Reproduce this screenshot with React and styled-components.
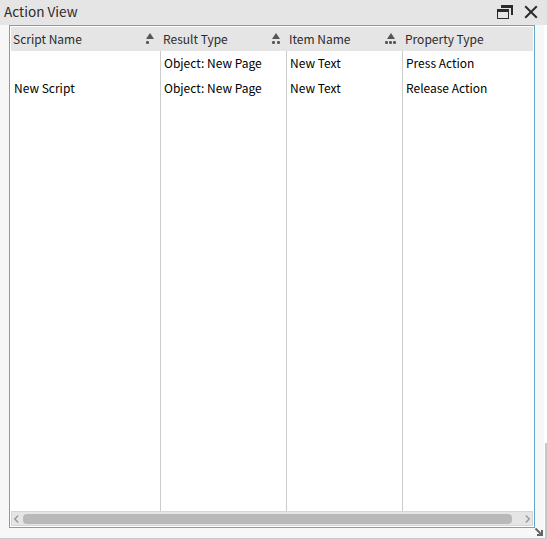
import React from "react";
import styled, { createGlobalStyle } from "styled-components";

const columns = [
  { title: "Script Name", width: 150, dots: 1, cells: ["", "New Script"] },
  {
    title: "Result Type",
    width: 126,
    dots: 2,
    cells: ["Object: New Page", "Object: New Page"],
  },
  { title: "Item Name", width: 116, dots: 3, cells: ["New Text", "New Text"] },
  {
    title: "Property Type",
    width: 130,
    dots: 0,
    cells: ["Press Action", "Release Action"],
  },
];

const sortMarks = {
  1: { tip: 7, dots: [3] },
  2: { tip: 7, dots: [3, 8] },
  3: { tip: 6, dots: [0, 4, 8] },
};

const SortIcon = ({ dots }) => {
  const { tip, dots: positions } = sortMarks[dots];
  return (
    <S.Sort width="12" height="11" viewBox="0 0 12 11">
      <path d={`M${tip} 0 l4 6 h-8 z`} />
      {positions.map((x) => (
        <rect key={x} x={x} y="8" width="3" height="3" rx="1.2" />
      ))}
    </S.Sort>
  );
};

const App = () => {
  return (
    <>
      <GlobalStyle />
      <S.Window>
        <S.TitleBar>
          <S.Title>Action View</S.Title>
          <S.Tools>
            <svg width="16" height="14" viewBox="0 0 16 14">
              <path
                d="M4 0h12v10h-2V3H4zM0 4h12v10H0zM1 7v6h10V7z"
                fill="#2b2b2b"
                fillRule="evenodd"
              />
            </svg>
            <svg width="14" height="14" viewBox="0 0 14 14">
              <path
                d="M1.2 1.2l11.6 11.6M12.8 1.2l-11.6 11.6"
                stroke="#2b2b2b"
                strokeWidth="2"
              />
            </svg>
          </S.Tools>
        </S.TitleBar>
        <S.Panel>
          <S.Table>
            {columns.map((column) => (
              <S.Column key={column.title} $width={column.width}>
                <S.Head>
                  <S.Label>{column.title}</S.Label>
                  {column.dots > 0 && <SortIcon dots={column.dots} />}
                </S.Head>
                <S.Cells $divided={column.dots > 0}>
                  {column.cells.map((cell, i) => (
                    <S.Cell key={i}>{cell}</S.Cell>
                  ))}
                </S.Cells>
              </S.Column>
            ))}
          </S.Table>
          <S.ScrollBar>
            <S.Arrow width="5" height="8" viewBox="0 0 5 8">
              <path d="M4.2 0.5L0.8 4l3.4 3.5" />
            </S.Arrow>
            <S.Thumb />
            <S.Arrow width="5" height="8" viewBox="0 0 5 8">
              <path d="M0.8 0.5L4.2 4L0.8 7.5" />
            </S.Arrow>
          </S.ScrollBar>
        </S.Panel>
        <S.Edge />
        <S.Grip width="8" height="8" viewBox="0 0 8 8">
          <path d="M0.5 0.5L6 6" stroke="#666" strokeWidth="2" />
          <path d="M6 2h2v6H2V6h4z" fill="#666" />
        </S.Grip>
      </S.Window>
    </>
  );
};

const GlobalStyle = createGlobalStyle`
  body {
    margin: 0;
    background: #ffffff;
    overflow: hidden;
  }
`;

const S = {
  Window: styled.div`
    position: relative;
    box-sizing: border-box;
    width: 547px;
    height: 539px;
    border-bottom: 1px solid #c8c8c8;
    background: linear-gradient(to right, #f7f7f7 544px, #ffffff 544px);
    font-family: "Noto Sans CJK SC", sans-serif;
    font-size: 12px;
    color: #000000;
  `,
  TitleBar: styled.div`
    display: flex;
    justify-content: space-between;
    box-sizing: border-box;
    height: 25px;
    padding: 0 9px 0 4px;
    background: #e5e5e5;
  `,
  Title: styled.div`
    font-size: 13.6px;
    line-height: 23px;
    color: #2b2b2b;
  `,
  Tools: styled.div`
    display: flex;
    align-items: flex-start;
    gap: 11px;
    padding-top: 5px;
  `,
  Panel: styled.div`
    display: flex;
    flex-direction: column;
    box-sizing: border-box;
    width: 526px;
    height: 503px;
    margin-left: 9px;
    padding: 1px;
    border: 1px solid #62a8cd;
    background: #ffffff;
  `,
  Table: styled.div`
    display: flex;
    flex: 1;
  `,
  Column: styled.div`
    display: flex;
    flex-direction: column;
    width: ${({ $width }) => $width}px;
  `,
  Head: styled.div`
    display: flex;
    justify-content: space-between;
    height: 24px;
    padding: 0 6px 0 2px;
    background: #e5e5e5;
    color: #2b2b2b;
  `,
  Label: styled.span`
    line-height: 24px;
    white-space: nowrap;
  `,
  Sort: styled.svg`
    margin-top: 6px;
    fill: #555555;
  `,
  Cells: styled.div`
    flex: 1;
    padding-left: 3px;
    border-right: ${({ $divided }) => ($divided ? "1px solid #cccccc" : "none")};
  `,
  Cell: styled.div`
    height: 25px;
    line-height: 24px;
    white-space: nowrap;
  `,
  ScrollBar: styled.div`
    display: flex;
    align-items: center;
    box-sizing: border-box;
    height: 15px;
    padding: 0 2px;
    border: 1px solid #d6d6d6;
    background: #e5e5e5;
  `,
  Arrow: styled.svg`
    fill: none;
    stroke: #999999;
    stroke-width: 1.4;
  `,
  Thumb: styled.div`
    width: 489px;
    height: 10px;
    margin: 0 13px 0 4px;
    border-radius: 4px;
    background: #b9b9b9;
  `,
  Edge: styled.div`
    position: absolute;
    right: 0;
    bottom: -1px;
    width: 2px;
    height: 96px;
    background: #c8c8c8;
  `,
  Grip: styled.svg`
    position: absolute;
    left: 535px;
    top: 528px;
  `,
};

export default App;
